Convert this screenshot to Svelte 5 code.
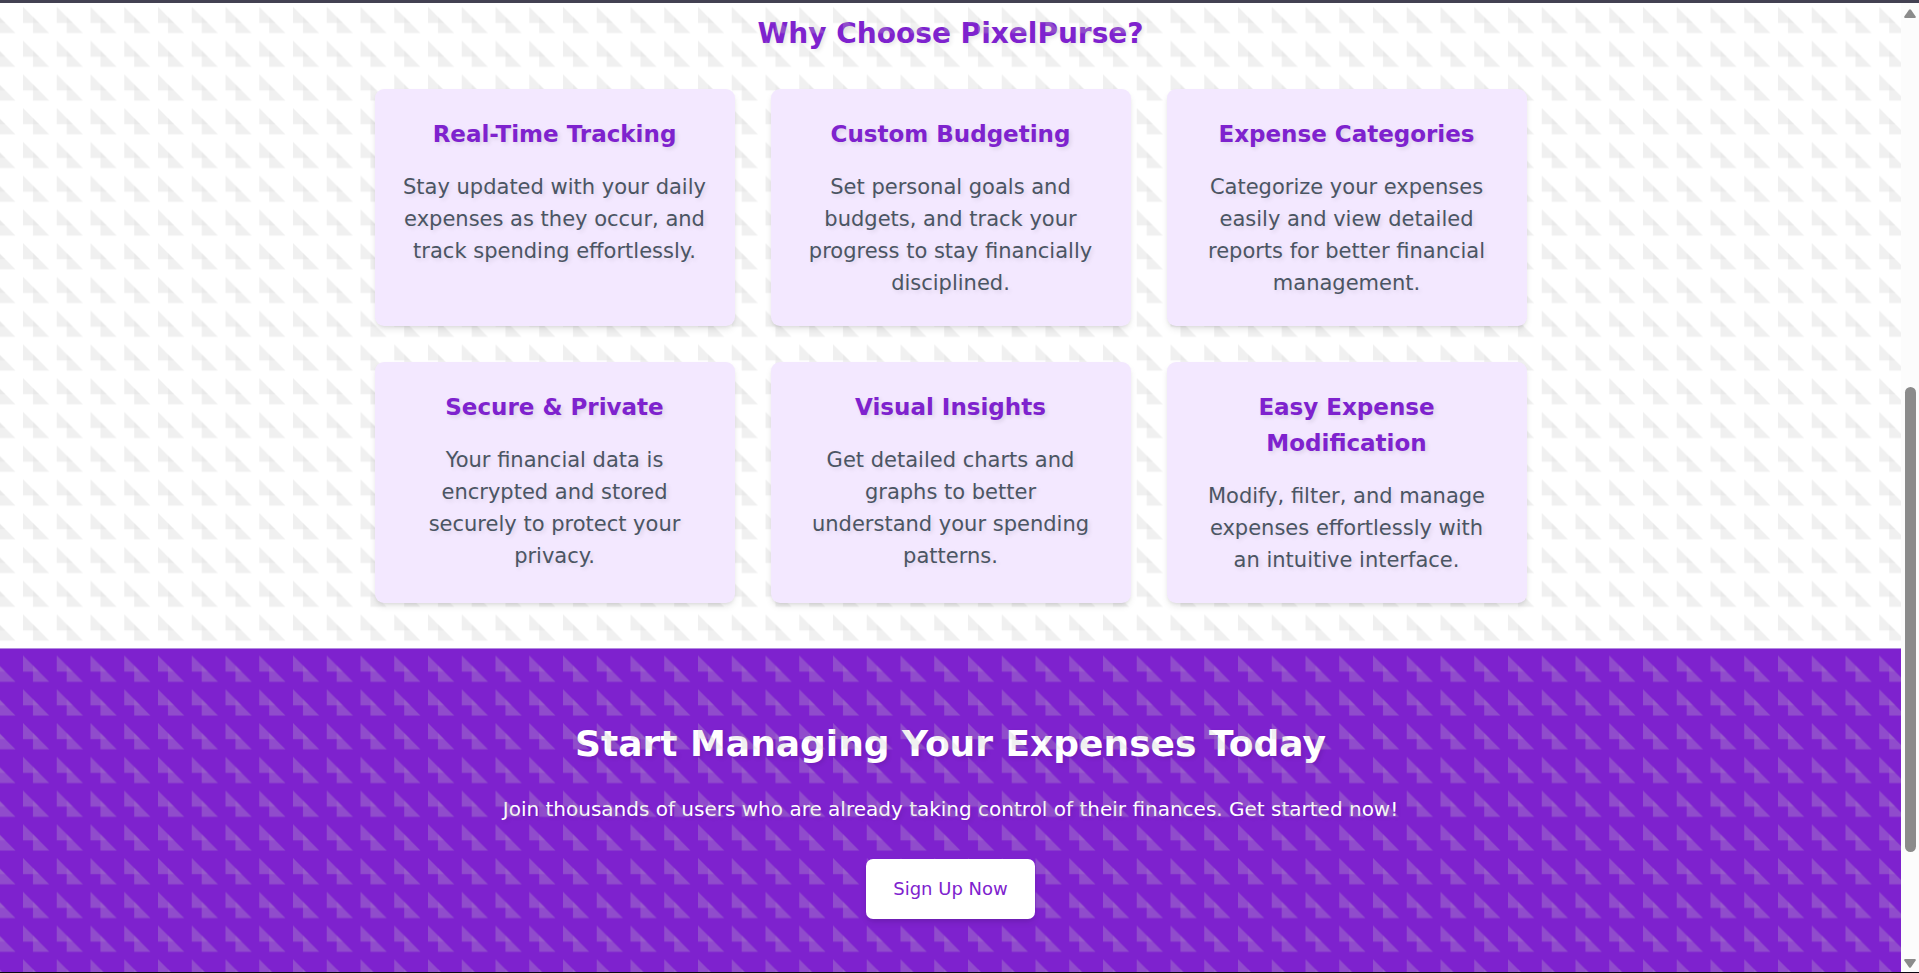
<script>
  const features = [
    { title: 'Real-Time Tracking', text: 'Stay updated with your daily expenses as they occur, and track spending effortlessly.' },
    { title: 'Custom Budgeting', text: 'Set personal goals and budgets, and track your progress to stay financially disciplined.' },
    { title: 'Expense Categories', text: 'Categorize your expenses easily and view detailed reports for better financial management.' },
    { title: 'Secure & Private', text: 'Your financial data is encrypted and stored securely to protect your privacy.' },
    { title: 'Visual Insights', text: 'Get detailed charts and graphs to better understand\u00a0your\u00a0spending patterns.' },
    { title: 'Easy Expense Modification', text: 'Modify, filter, and manage expenses effortlessly with an intuitive interface.' }
  ];
</script>

{#snippet triangles(id, y)}
  <svg class="texture" aria-hidden="true">
    <defs>
      <pattern {id} x="23" {y} width="33.75" height="33.75" patternUnits="userSpaceOnUse">
        <path d="M0 0L26.2 26.2H10V16.2H0Z" fill="#c3c3c3" fill-opacity=".26" />
        <path d="M10 10L16.2 16.2H10Z" fill="#c3c3c3" fill-opacity=".14" />
      </pattern>
    </defs>
    <rect width="100%" height="100%" fill="url(#{id})" />
  </svg>
{/snippet}

<div class="page">
  <div class="view">
    <main>
      <section class="features">
        <h2>Why Choose PixelPurse?</h2>
        {@render triangles('tri-light', 3.8)}
        <div class="grid">
          {#each features as f}
            <article>
              <h3>{f.title}</h3>
              <p>{f.text}</p>
            </article>
          {/each}
        </div>
      </section>
      <section class="cta">
        <h2>Start Managing Your Expenses Today</h2>
        <p>Join thousands of users who are already taking control of their finances. Get started now!</p>
        {@render triangles('tri-dark', 6.5)}
        <button type="button">Sign Up Now</button>
      </section>
    </main>
    <div class="scrollbar" aria-hidden="true">
      <svg width="12" height="10" viewBox="0 0 12 10"><path d="M5 .8Q6 -.4 7 .8L11.7 7.6Q12.2 9 10.8 9H1.2Q-.2 9 .3 7.6Z" fill="#8b8b8b" /></svg>
      <div class="track"><div class="thumb"></div></div>
      <svg width="12" height="10" viewBox="0 0 12 10"><path d="M5 9.2Q6 10.4 7 9.2L11.7 2.4Q12.2 1 10.8 1H1.2Q-.2 1 .3 2.4Z" fill="#8b8b8b" /></svg>
    </div>
  </div>
</div>

<style>
  :global(body) {
    margin: 0;
    background: #fff;
  }
  .page {
    box-sizing: border-box;
    min-height: 100vh;
    display: flex;
    flex-direction: column;
    border-top: 3px solid #434152;
    border-bottom: 1px solid #0c0812;
    font-family: "DejaVu Sans", sans-serif;
  }
  .view {
    flex: 1;
    display: flex;
  }
  main {
    flex: 1;
    min-width: 0;
    display: flex;
    flex-direction: column;
    text-align: center;
    text-shadow: 2px 2px 4px rgba(0, 0, 0, 0.1);
  }
  section {
    position: relative;
  }
  h2,
  h3,
  p {
    margin: 0;
  }
  .texture {
    position: absolute;
    inset: 0;
    width: 100%;
    height: 100%;
    pointer-events: none;
  }
  .features {
    padding: 11px 24px 45px;
  }
  .features h2 {
    margin-bottom: 35px;
    font-size: 28px;
    line-height: 40px;
    color: #7e22ce;
  }
  .grid {
    position: relative;
    display: grid;
    grid-template-columns: repeat(3, 1fr);
    gap: 36px;
    max-width: 1152px;
    margin: 0 auto;
  }
  article {
    padding: 27px;
    border-radius: 9px;
    background: #f3e8ff;
    box-shadow: 0 4px 7px -1px rgba(0, 0, 0, 0.1), 0 2px 4px -2px rgba(0, 0, 0, 0.1);
  }
  h3 {
    margin-bottom: 19px;
    font-size: 23px;
    line-height: 36px;
    color: #7e22ce;
  }
  article p {
    font-size: 21px;
    line-height: 32px;
    color: #4b5563;
  }
  .cta {
    flex: 1;
    padding: 72px 24px 53px;
    border-top: 1px solid #b58ae0;
    background: #7e22ce;
    color: #fff;
  }
  .cta h2 {
    margin-bottom: 26px;
    font-size: 36px;
    line-height: 46px;
  }
  .cta p {
    margin-bottom: 34px;
    font-size: 20px;
    line-height: 32px;
  }
  button {
    position: relative;
    display: block;
    margin: 0 auto;
    padding: 14px 27px;
    border: 0;
    border-radius: 7px;
    background: #fff;
    color: #7e22ce;
    font: 500 18px/32px "DejaVu Sans", sans-serif;
    box-shadow: 0 4px 7px -1px rgba(0, 0, 0, 0.1), 0 2px 4px -2px rgba(0, 0, 0, 0.1);
  }
  .scrollbar {
    flex: none;
    width: 18px;
    display: flex;
    flex-direction: column;
    align-items: center;
    gap: 2px;
    padding: 6px 0 4px;
    box-sizing: border-box;
    background: #fcfcfc;
  }
  .track {
    flex: 1;
    display: flex;
    flex-direction: column;
  }
  .track::before {
    content: "";
    flex: 366;
  }
  .track::after {
    content: "";
    flex: 104;
  }
  .thumb {
    flex: 465;
    width: 11px;
    border-radius: 6px;
    background: #8b8b8b;
  }
</style>
